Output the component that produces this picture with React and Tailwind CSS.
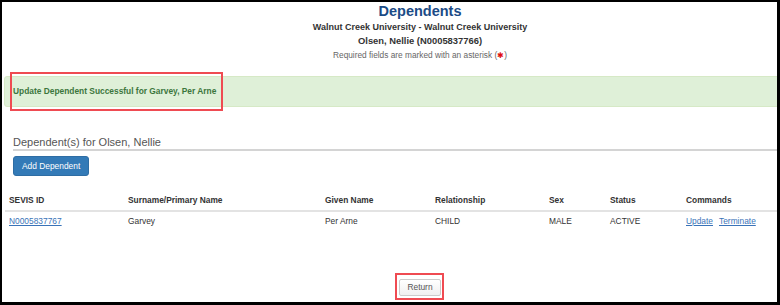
export default function App() {
  const cols = ["w-[119px]", "w-[197px]", "w-[110px]", "w-[114px]", "w-[61px]", "w-[76px]", "w-[150px]"];
  const heads = ["SEVIS ID", "Surname/Primary Name", "Given Name", "Relationship", "Sex", "Status", "Commands"];
  return (
    <div className="w-[780px] h-[305px] bg-black pt-[2px] pl-[2px] pr-[3px] pb-[3px] overflow-hidden" style={{ fontFamily: '"Liberation Sans", Arial, sans-serif' }}>
      <div className="relative w-full h-full bg-white overflow-hidden">
        <div className="w-[836px] flex flex-col">
          <div className="flex flex-col items-center pt-[1px]">
            <div className="h-[17px] text-[14.5px] leading-[17px] font-bold text-[#1b4b86]">Dependents</div>
            <div className="h-[14px] text-[9px] leading-[14px] font-bold text-[#333]">Walnut Creek University - Walnut Creek University</div>
            <div className="h-[14px] text-[9.4px] leading-[14px] font-bold text-[#333]">Olsen, Nellie (N0005837766)</div>
            <div className="h-[14px] text-[8.3px] leading-[14px] text-[#666] overflow-visible">
              Required fields are marked with an asterisk (<span className="text-[#e01010] text-[8px] leading-[10px]">✱</span>)
            </div>
          </div>

          <div className="mt-[14px] ml-[2px] h-[31px] bg-[#dff0d8] border border-[#d6e9c6] rounded-l-[3px] flex items-center pl-[8px]">
            <span className="text-[8.4px] font-bold text-[#3c763d]">Update Dependent Successful for Garvey, Per Arne</span>
          </div>

          <div className="mt-[28px] ml-[11px] border-b-2 border-[#d4d4d4] text-[11px] leading-[14px] text-[#555]">Dependent(s) for Olsen, Nellie</div>

          <div className="ml-[11px] mt-[5px] flex">
            <div className="h-[20px] px-[8px] bg-[#337ab7] border border-[#2e6da4] rounded-[3px] text-white text-[8.4px] flex items-center">Add Dependent</div>
          </div>

          <div className="ml-[3px] mt-[14px] flex flex-col text-[8.4px] text-[#333]">
            <div className="flex h-[22px] items-center border-b-2 border-[#e3e3e3]">
              {heads.map((h, i) => (
                <div key={h} className={`${cols[i]} pl-[4px] font-bold`}>{h}</div>
              ))}
            </div>
            <div className="flex h-[18px] items-center">
              <div className={`${cols[0]} pl-[4px]`}><span className="text-[#3a73b8] underline">N0005837767</span></div>
              <div className={`${cols[1]} pl-[4px]`}>Garvey</div>
              <div className={`${cols[2]} pl-[4px]`}>Per Arne</div>
              <div className={`${cols[3]} pl-[4px]`}>CHILD</div>
              <div className={`${cols[4]} pl-[4px]`}>MALE</div>
              <div className={`${cols[5]} pl-[4px]`}>ACTIVE</div>
              <div className={`${cols[6]} pl-[4px] flex gap-[6px]`}>
                <span className="text-[#3a73b8] underline">Update</span>
                <span className="text-[#3a73b8] underline">Terminate</span>
              </div>
            </div>
          </div>

          <div className="mt-[49px] flex justify-center">
            <div className="relative">
              <div className="h-[17px] px-[7px] border border-[#ccc] rounded-[2px] bg-gradient-to-b from-white to-[#f0f0f0] text-[8.4px] text-[#555] flex items-center">Return</div>
              <div className="absolute -left-[4px] -right-[3px] -top-[6px] -bottom-[4px] border-2 border-[#ef4b52]"></div>
            </div>
          </div>
        </div>

        <div className="absolute left-[8px] top-[70px] w-[213px] h-[39px] border-2 border-[#ef4b52]"></div>
      </div>
    </div>
  );
}
